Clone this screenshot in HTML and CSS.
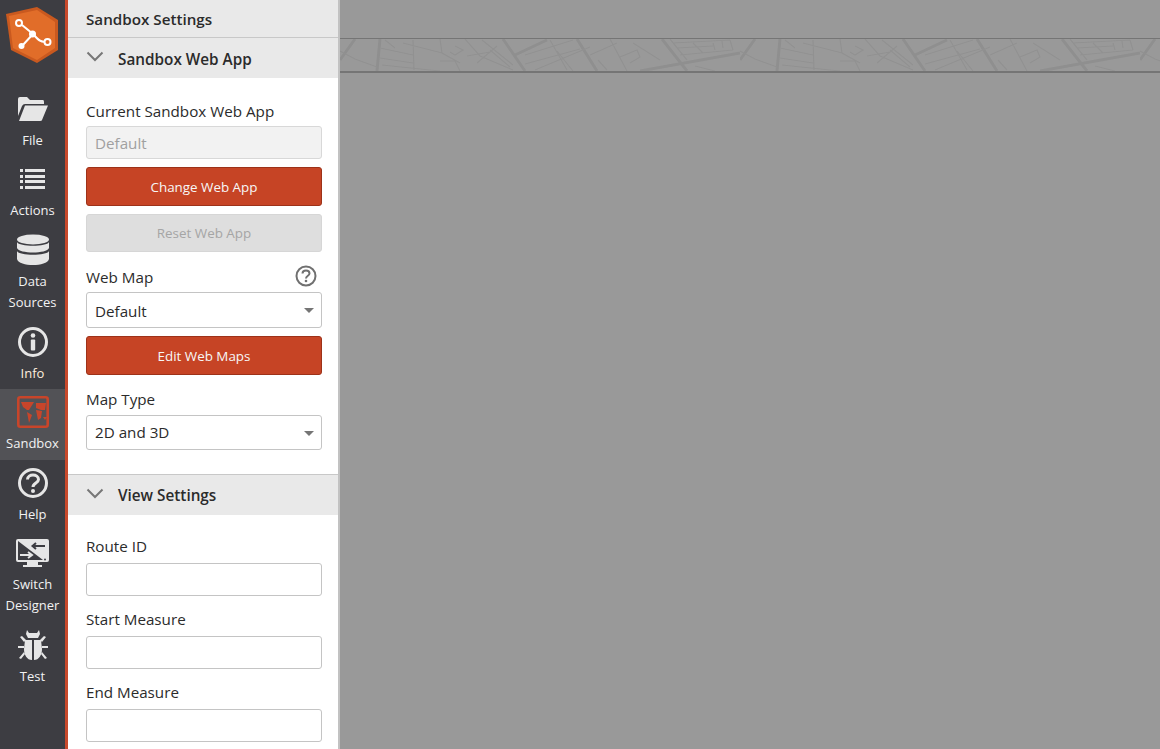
FILE: index.html
```html
<!DOCTYPE html>
<html lang="en">
<head>
<meta charset="utf-8">
<title>Sandbox Settings</title>
<link rel="stylesheet" href="styles.css">
</head>
<body>
<div class="app">
  <nav class="rail">
    <div class="logo">
      <svg width="64" height="70" viewBox="0 0 64 70">
        <path d="M37 7 L58 20 L58 50 L37 63 L11 50 L6 14 Z" fill="#c9591f"/>
        <path d="M37 10 L55 22 L55 48 L37 60 L13 48 L9 16 Z" fill="#e16d29"/>
        <path d="M22 25 L33 34 C37 38 39 42 45 42 M33 34 L22 46" fill="none" stroke="#fff" stroke-width="2"/>
        <circle cx="19" cy="23" r="3" fill="none" stroke="#fff" stroke-width="2"/>
        <circle cx="47.500" cy="42" r="3" fill="none" stroke="#fff" stroke-width="2"/>
        <circle cx="32.500" cy="34" r="3.500" fill="#fff"/>
        <circle cx="21.500" cy="46" r="3" fill="#fff"/>
      </svg>
    </div>
    <a class="item">
      <span class="ico"><svg width="32" height="26" viewBox="0 0 32 26"><path d="M1 3 Q1 1 3 1 L10 1 L13 4 L26 4 Q27 4 27 6 L27 8 L8 8 Q6 8 5 10 L1 20 Z" fill="#e6e6e6"/><path d="M8 9.500 L31 9.500 L25 24 Q25 25 23 25 L2 25 Z" fill="#e6e6e6"/></svg></span>
      <span class="lbl">File</span>
    </a>
    <a class="item roomy">
      <span class="ico"><svg width="26" height="22" viewBox="0 0 26 22" fill="#e6e6e6"><rect x="0" y="1" width="3" height="3"/><rect x="5" y="1" width="20" height="3"/><rect x="0" y="7" width="3" height="3"/><rect x="5" y="7" width="20" height="3"/><rect x="0" y="12" width="3" height="3"/><rect x="5" y="12" width="20" height="3"/><rect x="0" y="18" width="3" height="3"/><rect x="5" y="18" width="20" height="3"/></svg></span>
      <span class="lbl">Actions</span>
    </a>
    <a class="item roomy">
      <span class="ico"><svg width="34" height="32" viewBox="0 0 34 32" fill="#e6e6e6"><ellipse cx="17" cy="5.500" rx="16" ry="5"/><path d="M1 8 C3 13 31 13 33 8 L33 14 C31 20 3 20 1 14 Z"/><path d="M1 17 C3 22 31 22 33 17 L33 25 C31 33 3 33 1 25 Z"/></svg></span>
      <span class="lbl">Data<br>Sources</span>
    </a>
    <a class="item">
      <span class="ico"><svg width="32" height="32" viewBox="0 0 32 32"><circle cx="16" cy="16" r="13.500" fill="none" stroke="#e6e6e6" stroke-width="3"/><circle cx="16" cy="9.500" r="2.300" fill="#e6e6e6"/><rect x="13.800" y="13.500" width="4.400" height="11" rx="1" fill="#e6e6e6"/></svg></span>
      <span class="lbl lbl-warm">Info</span>
    </a>
    <a class="item roomy active">
      <span class="ico"><svg width="32" height="32" viewBox="0 0 32 32"><rect x="1.300" y="1.300" width="29.400" height="29.400" rx="2" fill="none" stroke="#c8452a" stroke-width="2.600"/><path d="M4 6 L17 6 L12 14 L10 14 L6 11 Z M10 16 L15 19 L12 27 Z M19 7 L29 7 L28 14 L24 14 L19 12 Z M19 14 L25 15 L24 22 L21 24 Z M26 21 L30 21 L28 24 Z" fill="#c8452a"/></svg></span>
      <span class="lbl">Sandbox</span>
    </a>
    <a class="item">
      <span class="ico"><svg width="32" height="32" viewBox="0 0 32 32"><circle cx="16" cy="16" r="13.500" fill="none" stroke="#e6e6e6" stroke-width="3"/><path d="M10.500 12.500 C10.500 6.500 21.500 6.500 21.500 12.500 C21.500 16 16 16 16 20" fill="none" stroke="#e6e6e6" stroke-width="3"/><circle cx="16" cy="24" r="2" fill="#e6e6e6"/></svg></span>
      <span class="lbl">Help</span>
    </a>
    <a class="item roomy">
      <span class="ico"><svg width="33" height="29" viewBox="0 0 33 29"><path d="M2 0 L31 0 Q33 0 33 2 L33 21 Q33 23 31 23 L2 23 Q0 23 0 21 L0 2 Q0 0 2 0 Z M11 23 L22 23 L22 26 L26 26 L26 28 L7 28 L7 26 L11 26 Z" fill="#e6e6e6"/><path d="M2 2 L2 21 L27 21 Z" fill="#3d3d42"/><circle cx="29" cy="20.500" r="1" fill="#3d3d42"/><path d="M4 16 L15 16 M12 13 L16 16 L12 19" stroke="#e6e6e6" stroke-width="2" fill="none"/><path d="M17 7 L29 7 M20 4 L16.500 7 L20 10" stroke="#3d3d42" stroke-width="2" fill="none"/></svg></span>
      <span class="lbl">Switch<br>Designer</span>
    </a>
    <a class="item">
      <span class="ico"><svg width="32" height="32" viewBox="0 0 32 32" fill="#e6e6e6"><path d="M10 1 L12 4 L20 4 L22 1 L23 5 L21 9 L11 9 L9 5 Z"/><path d="M8 11 L15 11 L15 31 C10 31 7 26 7 20 Z M17 11 L24 11 L25 20 C25 26 22 31 17 31 Z"/><path d="M1 17 L7 17 L7 19 L1 19 Z M25 17 L31 17 L31 19 L25 19 Z M3 8 L5 7 L9 11 L7 13 Z M29 8 L27 7 L23 11 L25 13 Z M2 29 L7 23 L8 25 L4 30 Z M30 29 L25 23 L24 25 L28 30 Z"/></svg></span>
      <span class="lbl">Test</span>
    </a>
  </nav>
  <aside class="panel">
    <header class="panel-title">Sandbox Settings</header>
    <section>
      <div class="sec-head">
        <svg class="chev" width="18" height="11" viewBox="0 0 18 11"><path d="M1.500 1.500 L9 9 L16.500 1.500" fill="none" stroke="#777" stroke-width="2"/></svg>
        <span class="sec-title">Sandbox Web App</span>
      </div>
      <div class="sec-body sec-first">
        <label class="field-label">Current Sandbox Web App</label>
        <div class="input disabled">Default</div>
        <button class="btn primary">Change Web App</button>
        <button class="btn off">Reset Web App</button>
        <div class="label-row">
          <label class="field-label">Web Map</label>
          <svg class="help" width="22" height="22" viewBox="0 0 22 22"><circle cx="11" cy="11" r="9.500" fill="none" stroke="#707070" stroke-width="2"/><path d="M7.500 8.500 C7.500 4.500 14.500 4.500 14.500 8.500 C14.500 10.800 11 10.800 11 13.500" fill="none" stroke="#707070" stroke-width="2"/><circle cx="11" cy="16" r="1.300" fill="#707070"/></svg>
        </div>
        <div class="input select">Default<i class="caret"></i></div>
        <button class="btn primary">Edit Web Maps</button>
        <label class="field-label map-type">Map Type</label>
        <div class="input select select-short">2D and 3D<i class="caret"></i></div>
      </div>
    </section>
    <section class="sec-second">
      <div class="sec-head">
        <svg class="chev" width="18" height="11" viewBox="0 0 18 11"><path d="M1.500 1.500 L9 9 L16.500 1.500" fill="none" stroke="#777" stroke-width="2"/></svg>
        <span>View Settings</span>
      </div>
      <div class="sec-body view-body">
        <label class="field-label">Route ID</label>
        <div class="input plain"></div>
        <label class="field-label">Start Measure</label>
        <div class="input plain"></div>
        <label class="field-label">End Measure</label>
        <div class="input plain"></div>
      </div>
    </section>
  </aside>
  <main class="stage">
    <div class="strip">
      <svg width="820" height="32" viewBox="0 0 820 32" fill="none">
        <defs>
          <pattern id="roads" x="0" y="0" width="400" height="32" patternUnits="userSpaceOnUse">
            <path stroke="#8f8f8f" stroke-width="3" d="M40 0 L37 32 M163 0 L185 32 M207 1 L175 16 M237 0 L257 32 M322 0 L347 32 M400 14 L300 32 M15 0 L0 21"/>
            <path stroke="#919191" stroke-width="1.200" d="M0 12 L15 20 L37 28 M40 9 L73 16 M40 19 L73 24 M42 26 L100 32 M45 1 L55 9 M63 4 L102 14 M73 1 L74 31 M100 0 L102 14 L120 24 M100 22 L115 22 L120 32 M115 7 L123 11 L115 16 L110 13 M125 0 L140 17 L173 31 M142 1 L173 26 M127 17 L150 13 M157 7 L137 24 M150 11 L170 28 M185 16 L233 1 M185 25 L240 10 M195 31 L250 8 M210 1 L227 31 M217 12 L233 32 M270 0 L287 32 M250 16 L277 4 M258 21 L267 31 M280 18 L297 11 L300 18 L290 24 M293 4 L320 21 M330 0 L347 21 M333 4 L390 1 M337 9 L373 7 M340 16 L393 11 M353 4 L363 14 M373 4 L375 11 M382 2 L383 9 M390 1 L393 11 M355 27 L375 32"/>
          </pattern>
        </defs>
        <rect width="820" height="32" fill="url(#roads)"/>
      </svg>
    </div>
  </main>
</div>
</body>
</html>
```
FILE: styles.css
```css
* { box-sizing: border-box; }
html, body { margin: 0; height: 100%; overflow: hidden; }
body { font-family: "Open Sans", "Noto Sans", sans-serif; font-size: 15px; color: #2b2b2b; }
.app { display: flex; height: 749px; width: 1160px; overflow: hidden; }

.rail { flex: 0 0 68px; background: #3d3d42; border-right: 3px solid #c8492b; display: flex; flex-direction: column; }
.logo { height: 86px; }
.logo svg { display: block; }
.item { display: flex; flex-direction: column; align-items: center; padding-bottom: 5px; color: #f2f2f2; }
.item.roomy { padding-bottom: 6px; }
.item.active { background: #525256; }
.ico { height: 44px; display: flex; align-items: center; justify-content: center; padding-top: 2px; }
.ico svg { display: block; }
.lbl { font-size: 13px; line-height: 21px; text-align: center; }
.lbl-warm { color: #fdeedd; }

.panel { flex: 0 0 272px; background: #fff; border-right: 2px solid #c2c2c2; overflow: hidden; }
.panel-title { height: 38px; background: #e9e9e9; border-bottom: 1px solid #c8c8c8; padding-left: 18px; font-size: 15.200px; font-weight: 600; line-height: 39px; }
.sec-head { height: 40px; background: #e9e9e9; display: flex; align-items: center; padding-left: 18px; font-size: 15.300px; font-weight: 600; }
.sec-title { padding-top: 2px; }
.chev { margin-right: 14px; margin-top: -3px; }
.sec-body { padding: 0 16px 0 18px; }
.sec-first { padding-top: 23px; height: 396px; }
.sec-second { border-top: 1px solid #c8c8c8; }
.view-body { padding-top: 21px; }
.field-label { display: block; font-size: 15.200px; line-height: 21px; }
.input { height: 33px; margin-top: 4px; border: 1px solid #c4c4c4; border-radius: 3px; padding-left: 8px; line-height: 33px; font-size: 15.200px; position: relative; background: #fff; }
.input.disabled { background: #f2f2f2; color: #a0a0a0; border-color: #d8d8d8; }
.input.select { height: 36px; line-height: 37px; }
.input.select-short { height: 35px; margin-top: 5px; line-height: 33px; }
.input.plain { margin-top: 6px; margin-bottom: 13px; }
.caret { position: absolute; right: 7px; top: 15px; border: 5px solid transparent; border-top: 5px solid #757575; border-bottom: 0; }
.btn { display: block; width: 100%; font-family: inherit; font-size: 13.400px; border-radius: 3px; text-align: center; }
.btn.primary { height: 39px; margin-top: 8px; background: #c64425; border: 1px solid #9d3219; color: #f7f7f7; }
.btn.off { height: 38px; margin-top: 8px; background: #dedede; border: 1px solid #d6d6d6; color: #a5a5a5; }
.label-row { display: flex; justify-content: space-between; align-items: center; height: 22px; margin-top: 14px; }
.help { margin-right: 5px; margin-top: -2px; }
.map-type { margin-top: 14px; }

.stage { flex: 1; background: #999; padding-top: 38px; }
.strip { height: 35px; border-top: 1px solid #757575; border-bottom: 2px solid #757575; overflow: hidden; }
.strip svg { display: block; }
```
